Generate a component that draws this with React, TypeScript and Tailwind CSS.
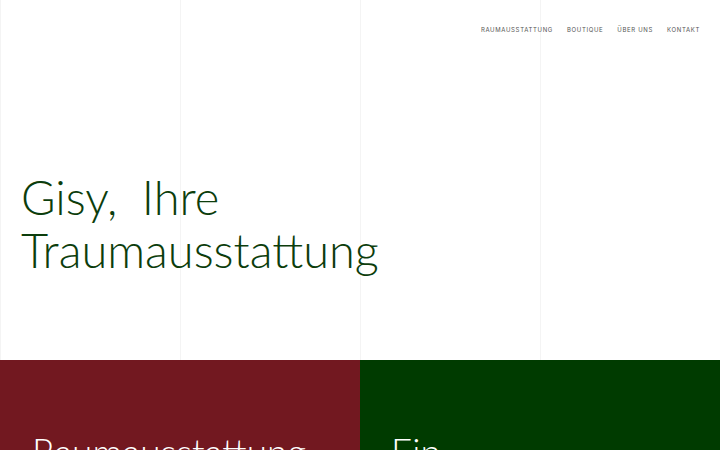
export default function App() {
  const nav = ['Raumausstattung', 'Boutique', 'Über uns', 'Kontakt'];
  return (
    <div className="relative h-[450px] w-[720px] overflow-hidden bg-white" style={{ fontFamily: 'Lato, "Noto Sans", sans-serif' }}>
      {/* faint column guides */}
      <div className="pointer-events-none absolute inset-0 grid grid-cols-4">
        <div className="border-l border-[#f4f4f4]" />
        <div className="border-l border-[#f4f4f4]" />
        <div className="border-l border-[#f4f4f4]" />
        <div className="border-l border-[#f4f4f4]" />
      </div>

      <header className="relative flex h-[59px] items-center justify-end pr-[20px]">
        <nav className="flex gap-[14px]">
          {nav.map((n) => (
            <a key={n} className="text-[6px] uppercase tracking-[0.11em] text-[#555]" style={{ fontFamily: 'Inter, sans-serif' }}>
              {n}
            </a>
          ))}
        </nav>
      </header>

      <section className="relative flex h-[301px] flex-col justify-start pl-[21px] pt-[112px]">
        <h1 className="text-[47px] font-light leading-[53px] text-[#0c3d0c] [word-spacing:0.25em]">
          Gisy, Ihre
          <br />
          Traumausstattung
        </h1>
      </section>

      <section className="relative grid grid-cols-2">
        <div className="h-[200px] bg-[#721820] pl-[32px] pt-[69px]">
          <h2 className="text-[37px] font-light leading-tight text-white">Raumausstattung</h2>
        </div>
        <div className="h-[200px] bg-[#003b00] pl-[31px] pt-[69px]">
          <h2 className="text-[37px] font-light leading-tight text-white">Ein</h2>
        </div>
      </section>
    </div>
  );
}
